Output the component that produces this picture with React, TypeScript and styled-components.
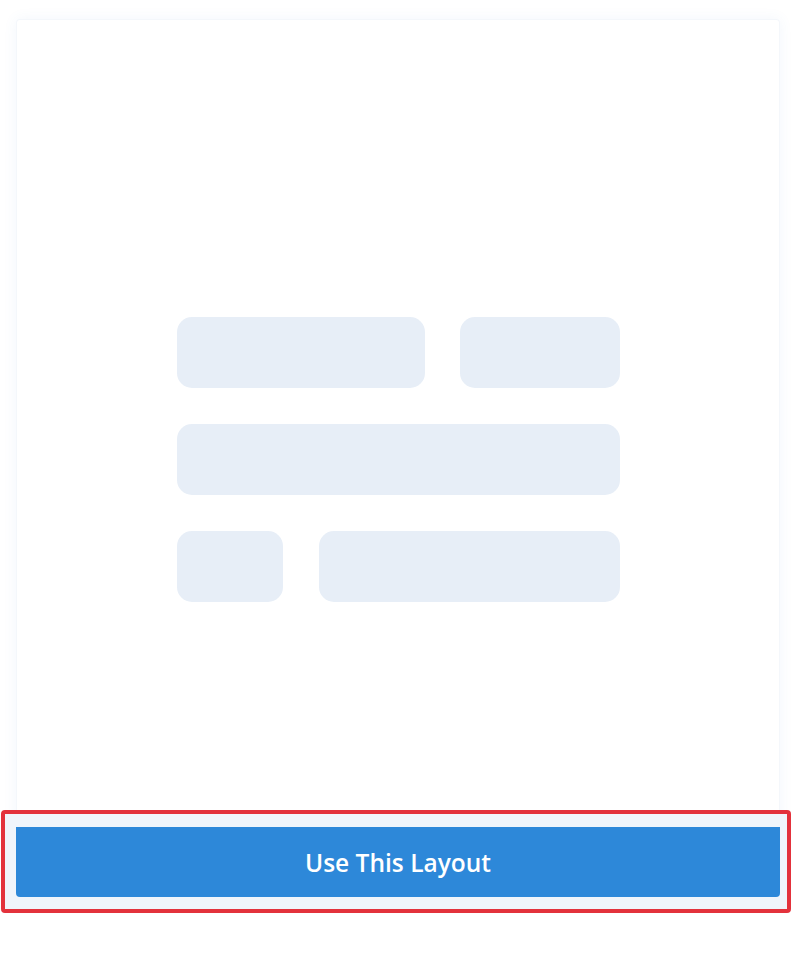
// @ts-nocheck
import styled, { createGlobalStyle } from 'styled-components';

const GlobalStyle = createGlobalStyle`
  html, body {
    margin: 0;
    padding: 0;
    background: #ffffff;
    font-family: "Open Sans", "Noto Sans", sans-serif;
  }
`;

const Page = styled.div`
  position: relative;
  width: 800px;
  height: 964px;
  padding: 19px 20px 0 16px;
  box-sizing: border-box;
`;

const Card = styled.div`
  position: relative;
  display: flex;
  flex-direction: column;
  width: 764px;
  background: #ffffff;
  border: 1px solid #f4f7fb;
  border-bottom: none;
  box-sizing: border-box;
  box-shadow: 0 0 14px rgba(70, 130, 210, 0.07);
  border-radius: 4px 4px 0 0;
`;

const Preview = styled.div`
  height: 807px;
  padding-top: 297px;
  box-sizing: border-box;
  display: flex;
  justify-content: center;
`;

const Skeleton = styled.div`
  display: flex;
  flex-direction: column;
  gap: 36px;
  width: 443px;
`;

const Row = styled.div`
  display: flex;
  gap: ${({ $gap }) => $gap || 0}px;
`;

const Bar = styled.div`
  width: ${({ $w }) => $w}px;
  height: 71px;
  border-radius: 15px;
  background: #e7eef7;
`;

/* hand-drawn red annotation around the button */
const Highlight = styled.div`
  position: absolute;
  left: 1px;
  top: 810px;
  width: 790px;
  height: 103px;
  box-sizing: border-box;
  border: 4px solid #e3323c;
  border-radius: 4px;
  background: #f0f5fb;
  z-index: 0;
`;

const Button = styled.button`
  position: relative;
  z-index: 1;
  height: 70px;
  width: 764px;
  margin-left: -1px;
  border: none;
  border-radius: 0 0 4px 4px;
  background: #2d88d9;
  color: #ffffff;
  font-family: "Open Sans", "Noto Sans", sans-serif;
  font-size: 24.5px;
  font-weight: 600;
  cursor: pointer;
`;

export default function App() {
  return (
    <>
      <GlobalStyle />
      <Page>
        <Card>
          <Preview>
            <Skeleton>
              <Row $gap={35}>
                <Bar $w={248} />
                <Bar $w={160} />
              </Row>
              <Row>
                <Bar $w={443} />
              </Row>
              <Row $gap={36}>
                <Bar $w={106} />
                <Bar $w={301} />
              </Row>
            </Skeleton>
          </Preview>
          <Button>Use This Layout</Button>
        </Card>
        <Highlight />
      </Page>
    </>
  );
}
